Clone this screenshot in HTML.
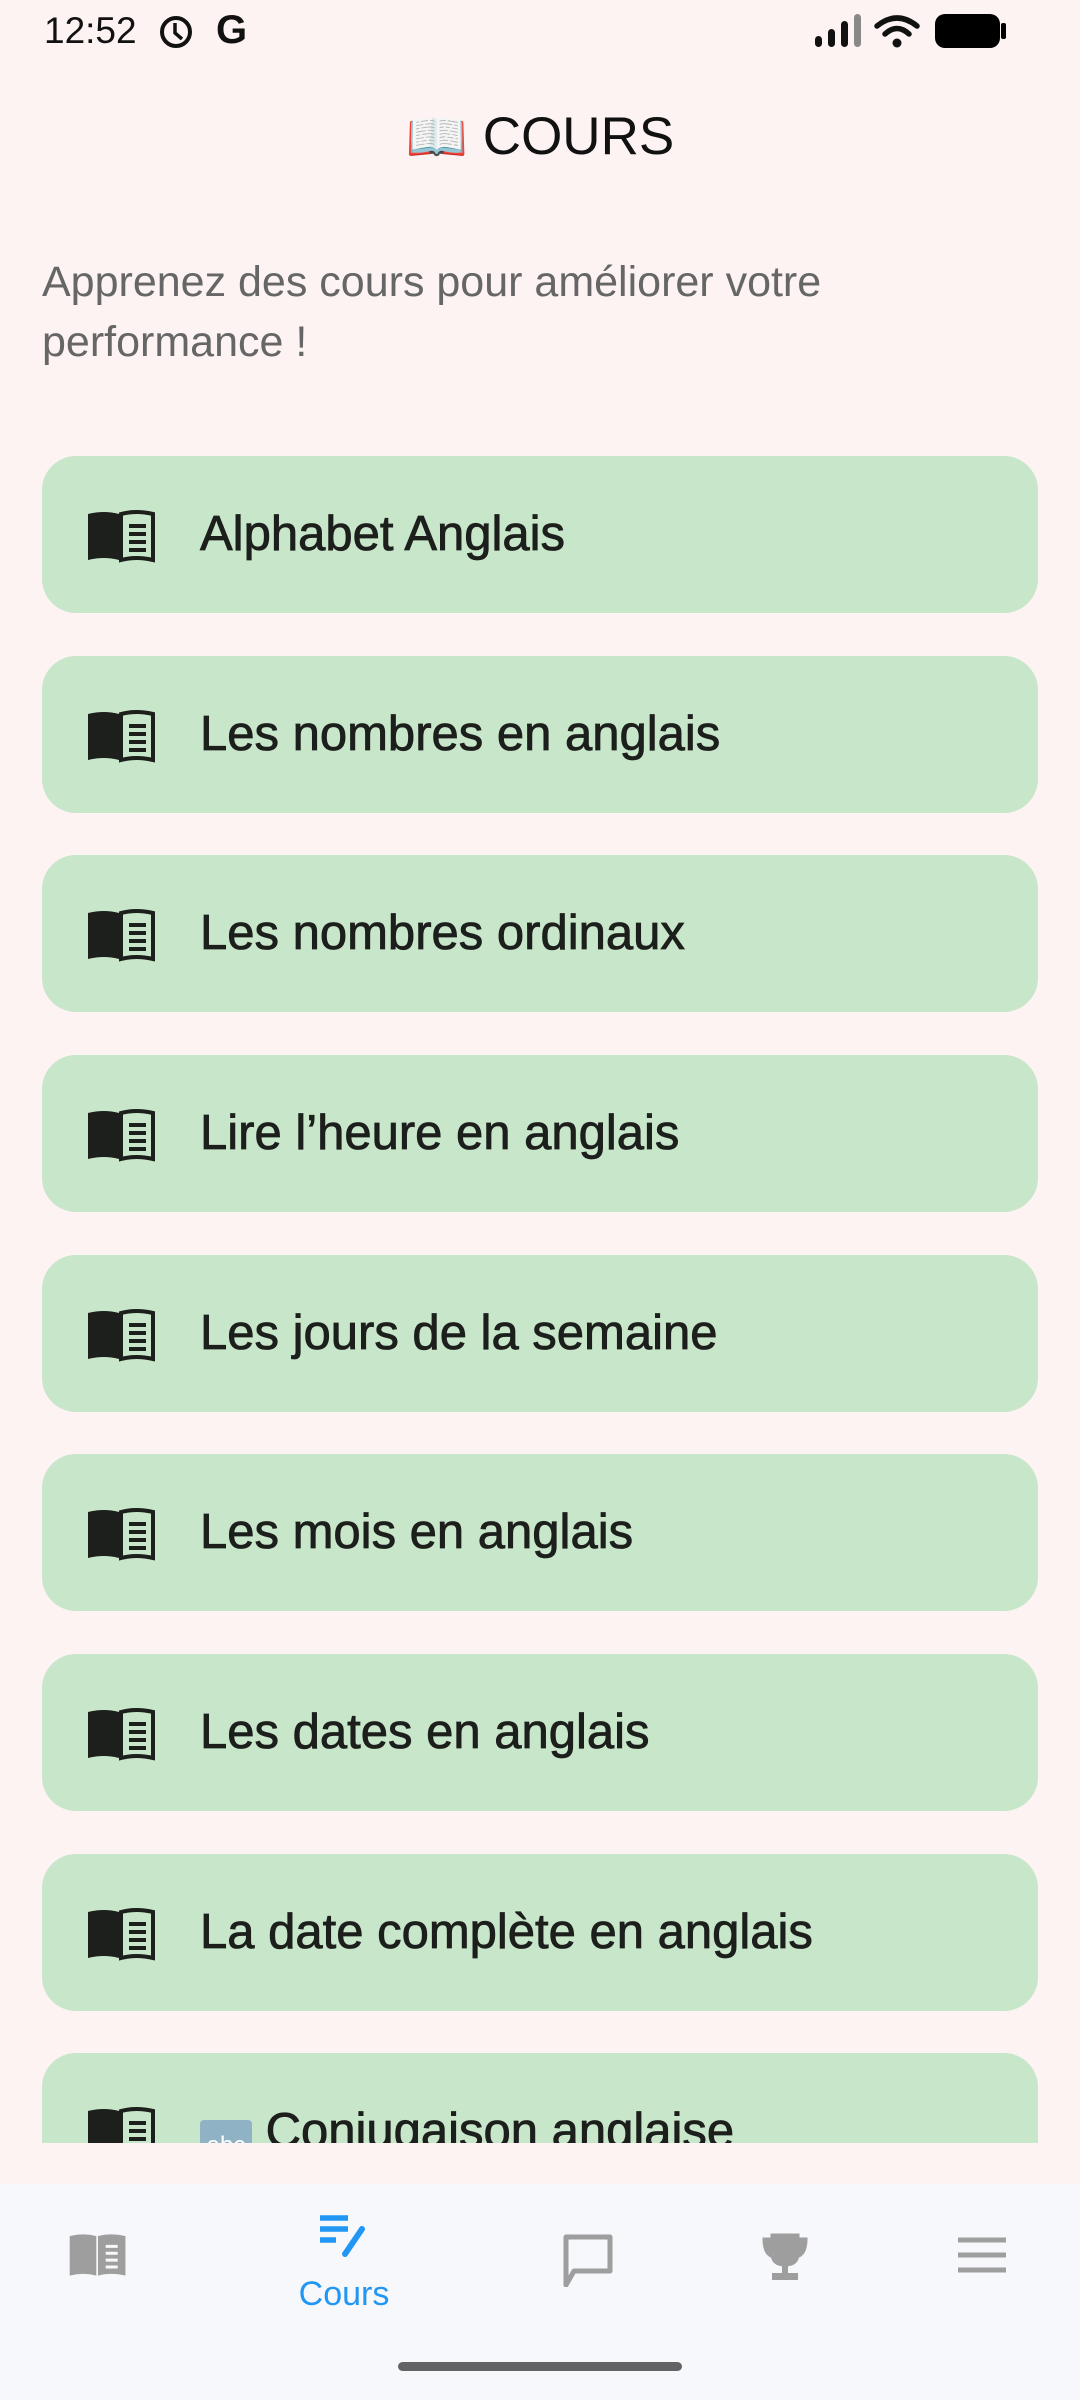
<!DOCTYPE html>
<html><head><meta charset="utf-8">
<style>
*{margin:0;padding:0;box-sizing:border-box}
html,body{width:1080px;height:2400px;overflow:hidden;background:#fdf3f3;font-family:"Liberation Sans","Noto Sans CJK JP",sans-serif}
.abs{position:absolute}
.time{left:44px;top:10px;font-size:37px;color:#111}
.title{left:0;width:1080px;top:106px;text-align:center;font-size:53px;color:#111}
.sub{left:42px;top:252px;font-size:43px;line-height:60px;color:#666;width:1000px}
.clip{left:0;top:0;width:1080px;height:2143px;overflow:hidden}
.card{position:absolute;left:42px;width:996px;height:157px;background:#c8e6c9;border-radius:34px}
.card svg{position:absolute;left:44px;top:52px}
.card span{position:absolute;left:158px;top:50px;font-size:49px;color:#1c1f1c;-webkit-text-stroke:0.8px #1c1f1c;white-space:nowrap}
.nav{left:0;top:2184px;width:1080px;height:216px;background:#f7f8fc}
</style></head><body>
<div class="abs time">12:52</div>
<svg class="abs" style="left:158px;top:14px" width="36" height="36" viewBox="0 0 36 36"><circle cx="18" cy="18" r="14" fill="none" stroke="#111" stroke-width="4"/><path d="M17 9v10l7 6" fill="none" stroke="#111" stroke-width="3.5"/></svg>
<div class="abs" style="left:216px;top:8px;font-size:40px;font-weight:bold;color:#111">G</div>
<svg class="abs" style="left:814px;top:14px" width="50" height="34" viewBox="0 0 50 34"><rect x="1" y="22" width="7" height="11" rx="3.5" fill="#111"/><rect x="14" y="15" width="7" height="18" rx="3.5" fill="#111"/><rect x="27" y="7" width="7" height="26" rx="3.5" fill="#111"/><rect x="40" y="0" width="7" height="33" rx="3.5" fill="#888"/></svg>
<svg class="abs" style="left:874px;top:14px" width="46" height="34" viewBox="0 0 46 34"><path d="M3 12Q23 -4 43 12" fill="none" stroke="#111" stroke-width="5.5" stroke-linecap="round"/><path d="M11 20Q23 9 35 20" fill="none" stroke="#111" stroke-width="5.5" stroke-linecap="round"/><circle cx="23" cy="29" r="4.5" fill="#111"/></svg>
<svg class="abs" style="left:934px;top:13px" width="74" height="36" viewBox="0 0 74 36"><rect x="1" y="1" width="65" height="34" rx="10" fill="#000"/><rect x="67" y="10" width="5" height="16" rx="2" fill="#000"/></svg>

<div class="abs title"><span style="font-family:'Noto Color Emoji','DejaVu Sans',sans-serif;font-size:50px">📖</span> COURS</div>
<div class="abs sub">Apprenez des cours pour améliorer votre<br>performance !</div>

<div class="abs clip">
<svg width="0" height="0" style="position:absolute"><defs><g id="bk"><path d="M2 6Q18 2 33 6V52Q18 48 2 52Z" fill="#1c1f1c"/><path d="M35 6Q50 2 67 6V52Q50 48 35 52Z" fill="none" stroke="#1c1f1c" stroke-width="4"/><path d="M43 18H60M43 26H60M43 34H60M43 42H60" stroke="#1c1f1c" stroke-width="4"/></g></defs></svg>
<div class="card" style="top:456px"><svg width="70" height="56" viewBox="0 0 70 56"><use href="#bk"/></svg><span>Alphabet Anglais</span></div>
<div class="card" style="top:656px"><svg width="70" height="56" viewBox="0 0 70 56"><use href="#bk"/></svg><span>Les nombres en anglais</span></div>
<div class="card" style="top:855px"><svg width="70" height="56" viewBox="0 0 70 56"><use href="#bk"/></svg><span>Les nombres ordinaux</span></div>
<div class="card" style="top:1055px"><svg width="70" height="56" viewBox="0 0 70 56"><use href="#bk"/></svg><span>Lire l’heure en anglais</span></div>
<div class="card" style="top:1255px"><svg width="70" height="56" viewBox="0 0 70 56"><use href="#bk"/></svg><span>Les jours de la semaine</span></div>
<div class="card" style="top:1454px"><svg width="70" height="56" viewBox="0 0 70 56"><use href="#bk"/></svg><span>Les mois en anglais</span></div>
<div class="card" style="top:1654px"><svg width="70" height="56" viewBox="0 0 70 56"><use href="#bk"/></svg><span>Les dates en anglais</span></div>
<div class="card" style="top:1854px"><svg width="70" height="56" viewBox="0 0 70 56"><use href="#bk"/></svg><span>La date complète en anglais</span></div>
<div class="card" style="top:2053px"><svg width="70" height="56" viewBox="0 0 70 56"><use href="#bk"/></svg><span><span style="position:static;-webkit-text-stroke:0;display:inline-block;width:52px;height:52px;background:#8fb3c4;border-radius:4px;color:#fff;font-size:24px;text-align:center;line-height:52px;vertical-align:-6px">abc</span> Conjugaison anglaise</span></div>
</div>

<div class="abs nav">
<svg class="abs" style="left:68px;top:45px" width="60" height="52" viewBox="0 0 70 56"><path d="M2 6Q18 2 33 6V52Q18 48 2 52Z" fill="#9e9e9e"/><path d="M35 6Q50 2 67 6V52Q50 48 35 52Z" fill="#9e9e9e"/><path d="M44 18H58M44 26H58M44 34H58M44 42H58" stroke="#f7f8fc" stroke-width="3.5"/></svg>
<svg class="abs" style="left:318px;top:30px" width="52" height="52" viewBox="0 0 52 52"><path d="M2 4H30M2 15H30M2 26H18" stroke="#2196f3" stroke-width="5.5"/><path d="M27 40L44 15" stroke="#2196f3" stroke-width="6" stroke-linecap="round"/></svg>
<div class="abs" style="left:294px;top:91px;width:100px;text-align:center;font-size:34px;color:#2196f3">Cours</div>
<svg class="abs" style="left:562px;top:49px" width="54" height="54" viewBox="0 0 54 54"><path d="M4 4H48V38H12L4 52Z" fill="none" stroke="#9e9e9e" stroke-width="5" stroke-linejoin="round"/></svg>
<svg class="abs" style="left:760px;top:47px" width="50" height="52" viewBox="0 0 50 52"><path d="M12 4H38V22Q38 34 25 34Q12 34 12 22Z M12 8H4Q4 24 14 26 M38 8H46Q46 24 36 26" fill="#9e9e9e" stroke="#9e9e9e" stroke-width="3"/><rect x="22" y="33" width="6" height="10" fill="#9e9e9e"/><rect x="12" y="42" width="26" height="7" fill="#9e9e9e"/></svg>
<svg class="abs" style="left:958px;top:53px" width="48" height="40" viewBox="0 0 48 40"><path d="M0 3H48M0 18H48M0 33H48" stroke="#9e9e9e" stroke-width="5"/></svg>
<div class="abs" style="left:398px;top:178px;width:284px;height:9px;border-radius:5px;background:#636366"></div>
</div>
</body></html>
